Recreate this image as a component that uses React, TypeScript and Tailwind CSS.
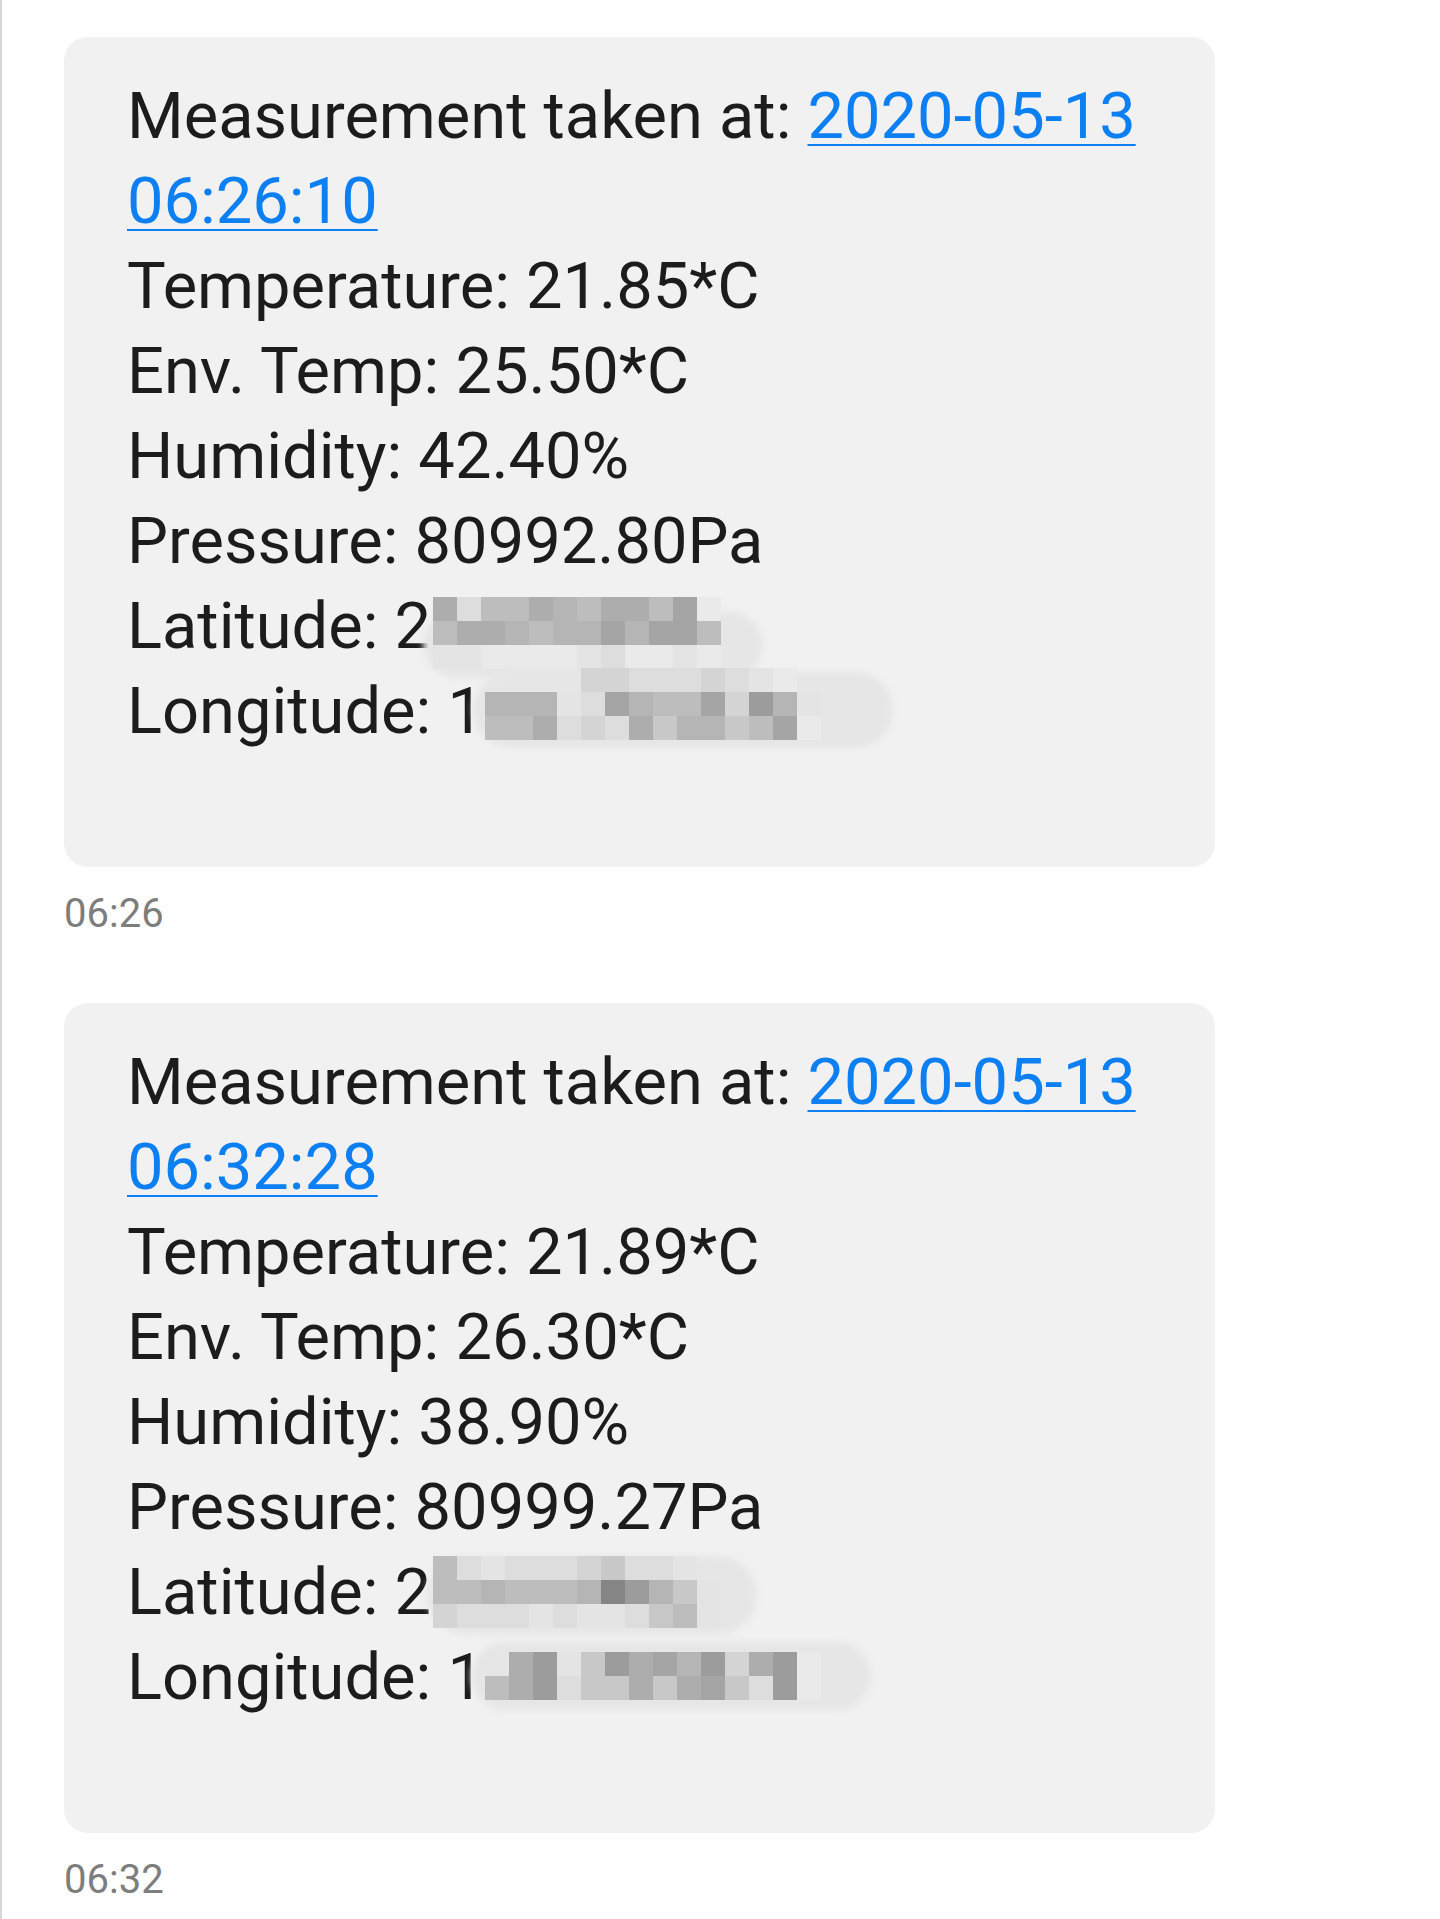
const shade: Record<string, string> = {
  '1': 'bg-[#858585]',
  '2': 'bg-[#9c9c9c]',
  '3': 'bg-[#a5a5a5]',
  '4': 'bg-[#adadad]',
  '5': 'bg-[#b5b5b5]',
  '6': 'bg-[#bdbdbd]',
  '7': 'bg-[#c8c8c8]',
  '8': 'bg-[#d4d4d4]',
  '9': 'bg-[#dddddd]',
  a: 'bg-[#e4e4e4]',
  b: 'bg-[#eaeaea]',
  '.': '',
};

type MosaicProps = { pos: string; smear: string; rows: string[] };

// pixelated blur that hides the coordinates
const Mosaic = ({ pos, smear, rows }: MosaicProps) => (
  <div className={`pointer-events-none absolute ${pos}`}>
    <div className={`absolute rounded-full bg-[#e6e6e6] blur-[3px] ${smear}`} />
    <div className="relative flex flex-col blur-[0.6px]">
      {rows.map((row, i) => (
        <div key={i} className="flex">
          {row.split('').map((c, j) => (
            <div key={j} className={`h-6 w-6 ${shade[c]}`} />
          ))}
        </div>
      ))}
    </div>
  </div>
);

type Msg = {
  date: string;
  time: string;
  temp: string;
  env: string;
  hum: string;
  pres: string;
  lat: string;
  lon: string;
  latMask: MosaicProps;
  lonMask: MosaicProps;
  stamp: string;
};

const messages: Msg[] = [
  {
    date: '2020-05-13',
    time: '06:26:10',
    temp: '21.85*C',
    env: '25.50*C',
    hum: '42.40%',
    pres: '80992.80Pa',
    lat: '2',
    lon: '1',
    latMask: {
      pos: 'left-[306px] top-[13px]',
      smear: 'left-[-10px] top-[15px] h-[66px] w-[340px]',
      rows: ['49664564463b', '644565535336', 'aabbbba9bbab'],
    },
    lonMask: {
      pos: 'left-[358px] top-[-1px]',
      smear: 'left-[-12px] top-[4px] h-[76px] w-[420px]',
      rows: ['....8899989ab.', '555a935663825a', '6649894755763b'],
    },
    stamp: '06:26',
  },
  {
    date: '2020-05-13',
    time: '06:32:28',
    temp: '21.89*C',
    env: '26.30*C',
    hum: '38.90%',
    pres: '80999.27Pa',
    lat: '2',
    lon: '1',
    latMask: {
      pos: 'left-[306px] top-[6px]',
      smear: 'left-[-6px] top-[0px] h-[78px] w-[330px]',
      rows: ['69a9998799a.', '66566651257a', '8999a9aa976a'],
    },
    lonMask: {
      pos: 'left-[358px] top-[17px]',
      smear: 'left-[-14px] top-[-10px] h-[68px] w-[400px]',
      rows: ['.42a724352842b', '6429774743792b'],
    },
    stamp: '06:32',
  },
];

const Bubble = ({ m }: { m: Msg }) => (
  <div>
    <div className="h-[830px] w-[1151px] rounded-[24px] bg-[#f1f1f1] pl-[63px] pt-[37px] text-[65px] leading-[85px] text-[#1c1c1c]">
      <div>
        Measurement taken at:{' '}
        <a href="#" className="text-[#0c7ff2] underline decoration-2 underline-offset-[6px]">
          {m.date}
        </a>
      </div>
      <div>
        <a href="#" className="text-[#0c7ff2] underline decoration-2 underline-offset-[6px]">
          {m.time}
        </a>
      </div>
      <div>Temperature: {m.temp}</div>
      <div>Env. Temp: {m.env}</div>
      <div>Humidity: {m.hum}</div>
      <div>Pressure: {m.pres}</div>
      <div className="relative">
        Latitude: {m.lat}
        <Mosaic {...m.latMask} />
      </div>
      <div className="relative">
        Longitude: {m.lon}
        <Mosaic {...m.lonMask} />
      </div>
    </div>
    <div className="mt-[27px] text-[40px] leading-[40px] text-[#7d7d7d]">{m.stamp}</div>
  </div>
);

export default function App() {
  return (
    <div className="h-[1919px] w-full overflow-hidden border-l-2 border-[#d6d6d6] bg-white pl-[62px] pt-[37px] font-['Roboto',sans-serif]">
      <div className="flex flex-col gap-[69px]">
        {messages.map((m) => (
          <Bubble key={m.stamp} m={m} />
        ))}
      </div>
    </div>
  );
}
